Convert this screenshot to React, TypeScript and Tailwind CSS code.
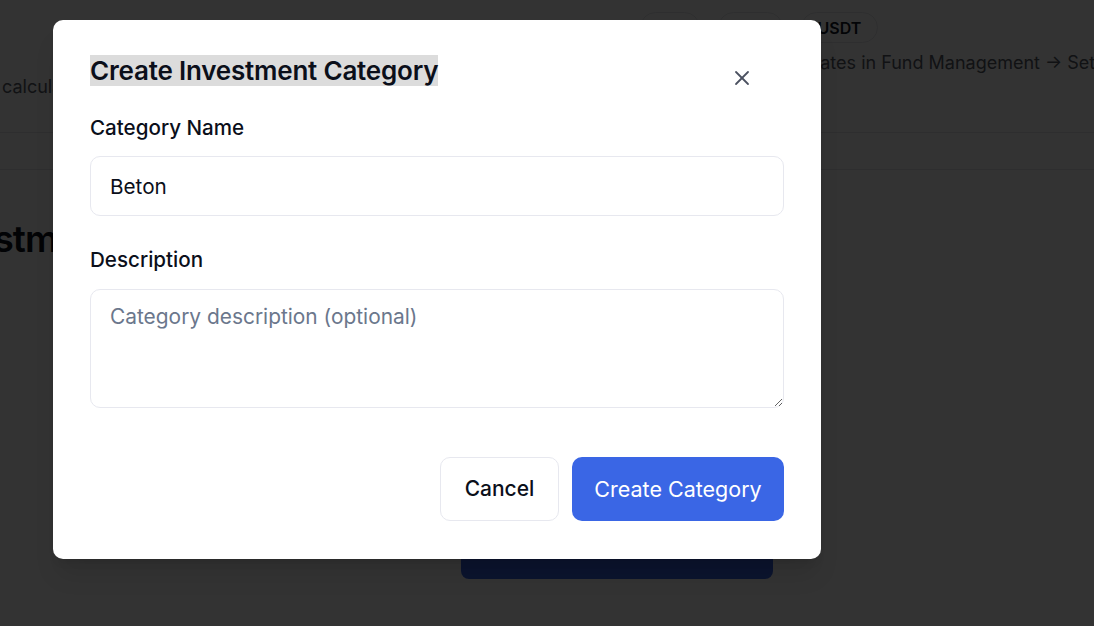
import { useState } from "react";

const CloseIcon = () => (
  <svg width="16" height="16" viewBox="0 0 16 16" fill="none" stroke="#4b5160" strokeWidth="1.8" strokeLinecap="round">
    <path d="M2 2 14 14" />
    <path d="M14 2 2 14" />
  </svg>
);

const App = () => {
  const [name, setName] = useState("Beton");
  const [description, setDescription] = useState("");

  return (
    <div className="relative w-[1094px] h-[626px] overflow-hidden bg-white font-['Inter',sans-serif]">
      {/* page behind the dialog */}
      <div className="h-[133px] border-b border-[#e5e7eb]">
        <div className="flex gap-[18px] pl-[640px] pt-[12px]">
          <span className="h-[31px] w-[60px] rounded-full border border-[#e5e7eb] text-[16px] font-semibold text-[#111827] flex items-center justify-center">EUR</span>
          <span className="h-[31px] w-[65px] rounded-full border border-[#e5e7eb] text-[16px] font-semibold text-[#111827] flex items-center justify-center">USD</span>
          <span className="h-[31px] w-[77px] rounded-full border border-[#e5e7eb] text-[16px] font-semibold text-[#111827] flex items-center justify-center">USDT</span>
        </div>
        <p className="pl-[612px] mt-[6px] text-[18px] text-[#555b66] whitespace-nowrap">
          Set currency exchange rates in Fund Management → Settings
        </p>
        <p className="pl-[2px] text-[18px] leading-[22px] text-[#555b66] whitespace-nowrap">
          calculations use the latest stored rates.
        </p>
      </div>
      <div className="h-[37px] border-b border-[#e5e7eb]" />
      <div className="ml-[-78px] pt-[47px]">
        <h1 className="text-[37px] leading-[44px] font-semibold text-[#0b0f1a] tracking-tight">Investment Categories</h1>
        <div className="ml-[539px] mt-[248px] w-[312px] h-[70px] rounded-lg bg-[#3a66e5]" />
      </div>

      {/* overlay */}
      <div className="absolute inset-0 bg-black/80" />

      {/* dialog */}
      <div className="absolute left-[53px] top-[20px] w-[768px] rounded-[10px] bg-white shadow-xl px-[37px] pt-[35px] pb-[38px]">
        <h2 className="text-[26px] leading-[32px] font-semibold text-[#0b0f1a] tracking-[-0.2px]">
          <span className="bg-[#dcdcdc]">Create Investment Category</span>
        </h2>
        <button className="absolute right-[71px] top-[50px] p-0">
          <CloseIcon />
        </button>

        <label className="block mt-[27px] text-[20.6px] leading-[28px] font-medium text-[#0b0f1a]">Category Name</label>
        <input
          value={name}
          onChange={(e) => setName(e.target.value)}
          className="block mt-[14px] w-full h-[60px] rounded-[10px] border border-[#e7e8ef] px-[19px] text-[20.7px] text-[#0b0f1a] outline-none"
        />

        <label className="block mt-[30px] text-[20.6px] leading-[28px] font-medium text-[#0b0f1a]">Description</label>
        <textarea
          value={description}
          onChange={(e) => setDescription(e.target.value)}
          placeholder="Category description (optional)"
          className="block mt-[15px] w-full h-[119px] rounded-[10px] border border-[#e7e8ef] px-[19px] py-[13px] text-[20.9px] leading-[28px] text-[#0b0f1a] placeholder:text-[#6b778c] outline-none"
        />

        <div className="mt-[49px] flex justify-end gap-[13px]">
          <button className="h-[64px] w-[119px] rounded-[10px] border border-[#e7e8ef] bg-white text-[21px] font-medium text-[#0b0f1a]">
            Cancel
          </button>
          <button className="h-[64px] w-[212px] rounded-[10px] bg-[#3a66e5] text-[21.5px] font-normal text-white">
            Create Category
          </button>
        </div>
      </div>
    </div>
  );
};

export default App;
